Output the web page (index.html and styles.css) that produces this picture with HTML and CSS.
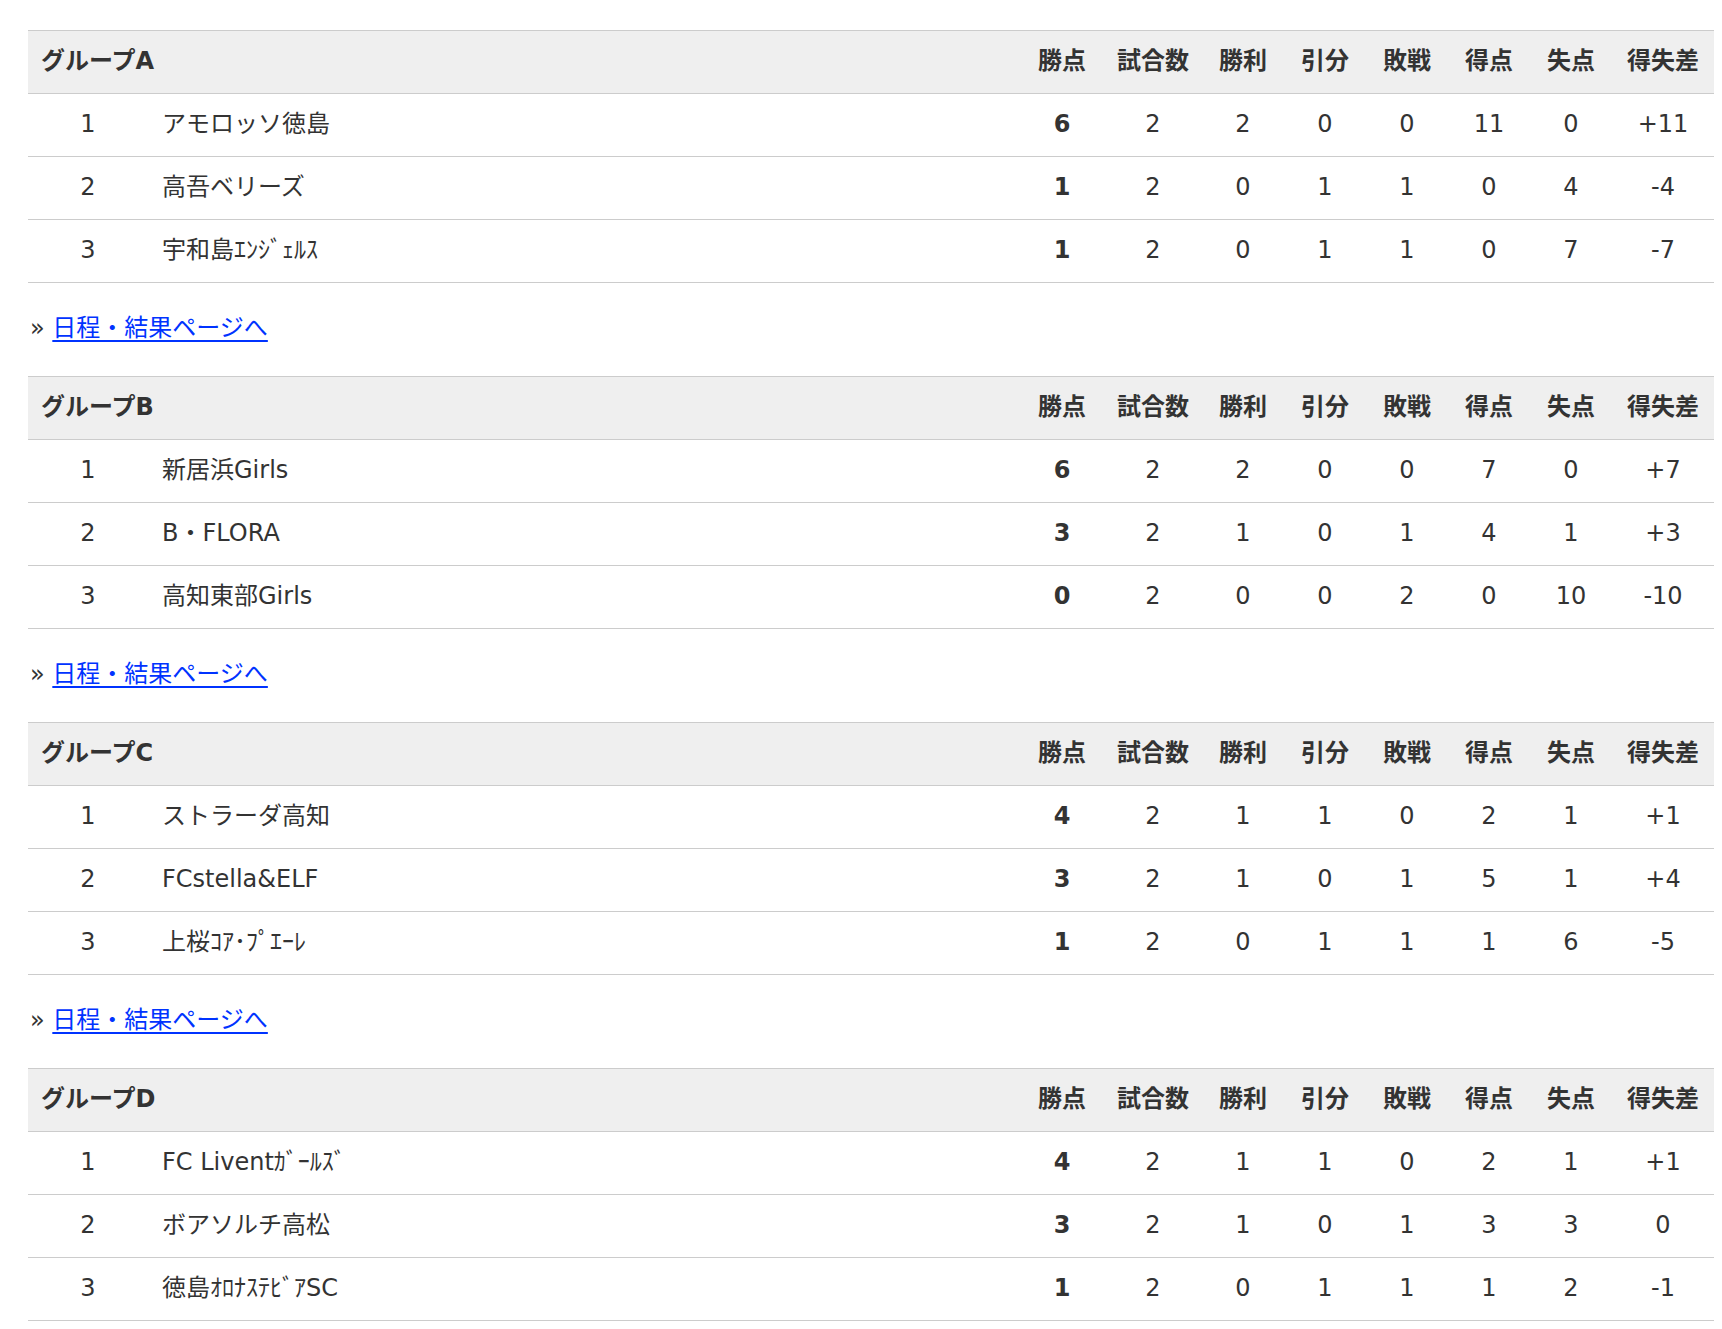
FILE: index.html
```html
<!DOCTYPE html>
<html lang="ja">
<head>
<meta charset="utf-8">
<title>グループ順位表</title>
<link rel="stylesheet" href="styles.css">
</head>
<body>
<div class="page">

<table class="standings">
<colgroup><col class="c-rank"><col class="c-team"><col class="c-pts"><col class="c-played"><col class="c-n"><col class="c-n"><col class="c-n"><col class="c-n"><col class="c-n"><col class="c-diff"></colgroup>
<thead><tr><th colspan="2" class="group">グループA</th><th>勝点</th><th>試合数</th><th>勝利</th><th>引分</th><th>敗戦</th><th>得点</th><th>失点</th><th>得失差</th></tr></thead>
<tbody>
<tr><td class="rank">1</td><td class="team">アモロッソ徳島</td><td class="pts">6</td><td>2</td><td>2</td><td>0</td><td>0</td><td>11</td><td>0</td><td>+11</td></tr>
<tr><td class="rank">2</td><td class="team">高吾ベリーズ</td><td class="pts">1</td><td>2</td><td>0</td><td>1</td><td>1</td><td>0</td><td>4</td><td>-4</td></tr>
<tr><td class="rank">3</td><td class="team">宇和島ｴﾝｼﾞｪﾙｽ</td><td class="pts">1</td><td>2</td><td>0</td><td>1</td><td>1</td><td>0</td><td>7</td><td>-7</td></tr>
</tbody>
</table>
<p class="more">» <a href="#">日程・結果ページへ</a></p>

<table class="standings">
<colgroup><col class="c-rank"><col class="c-team"><col class="c-pts"><col class="c-played"><col class="c-n"><col class="c-n"><col class="c-n"><col class="c-n"><col class="c-n"><col class="c-diff"></colgroup>
<thead><tr><th colspan="2" class="group">グループB</th><th>勝点</th><th>試合数</th><th>勝利</th><th>引分</th><th>敗戦</th><th>得点</th><th>失点</th><th>得失差</th></tr></thead>
<tbody>
<tr><td class="rank">1</td><td class="team">新居浜Girls</td><td class="pts">6</td><td>2</td><td>2</td><td>0</td><td>0</td><td>7</td><td>0</td><td>+7</td></tr>
<tr><td class="rank">2</td><td class="team">B・FLORA</td><td class="pts">3</td><td>2</td><td>1</td><td>0</td><td>1</td><td>4</td><td>1</td><td>+3</td></tr>
<tr><td class="rank">3</td><td class="team">高知東部Girls</td><td class="pts">0</td><td>2</td><td>0</td><td>0</td><td>2</td><td>0</td><td>10</td><td>-10</td></tr>
</tbody>
</table>
<p class="more">» <a href="#">日程・結果ページへ</a></p>

<table class="standings">
<colgroup><col class="c-rank"><col class="c-team"><col class="c-pts"><col class="c-played"><col class="c-n"><col class="c-n"><col class="c-n"><col class="c-n"><col class="c-n"><col class="c-diff"></colgroup>
<thead><tr><th colspan="2" class="group">グループC</th><th>勝点</th><th>試合数</th><th>勝利</th><th>引分</th><th>敗戦</th><th>得点</th><th>失点</th><th>得失差</th></tr></thead>
<tbody>
<tr><td class="rank">1</td><td class="team">ストラーダ高知</td><td class="pts">4</td><td>2</td><td>1</td><td>1</td><td>0</td><td>2</td><td>1</td><td>+1</td></tr>
<tr><td class="rank">2</td><td class="team">FCstella&amp;ELF</td><td class="pts">3</td><td>2</td><td>1</td><td>0</td><td>1</td><td>5</td><td>1</td><td>+4</td></tr>
<tr><td class="rank">3</td><td class="team">上桜ｺｱ･ﾌﾟｴｰﾚ</td><td class="pts">1</td><td>2</td><td>0</td><td>1</td><td>1</td><td>1</td><td>6</td><td>-5</td></tr>
</tbody>
</table>
<p class="more">» <a href="#">日程・結果ページへ</a></p>

<table class="standings">
<colgroup><col class="c-rank"><col class="c-team"><col class="c-pts"><col class="c-played"><col class="c-n"><col class="c-n"><col class="c-n"><col class="c-n"><col class="c-n"><col class="c-diff"></colgroup>
<thead><tr><th colspan="2" class="group">グループD</th><th>勝点</th><th>試合数</th><th>勝利</th><th>引分</th><th>敗戦</th><th>得点</th><th>失点</th><th>得失差</th></tr></thead>
<tbody>
<tr><td class="rank">1</td><td class="team">FC Liventｶﾞｰﾙｽﾞ</td><td class="pts">4</td><td>2</td><td>1</td><td>1</td><td>0</td><td>2</td><td>1</td><td>+1</td></tr>
<tr><td class="rank">2</td><td class="team">ボアソルチ高松</td><td class="pts">3</td><td>2</td><td>1</td><td>0</td><td>1</td><td>3</td><td>3</td><td>0</td></tr>
<tr><td class="rank">3</td><td class="team">徳島ｵﾛﾅｽﾃﾋﾞｱSC</td><td class="pts">1</td><td>2</td><td>0</td><td>1</td><td>1</td><td>1</td><td>2</td><td>-1</td></tr>
</tbody>
</table>

</div>
</body>
</html>
```
FILE: styles.css
```css
html, body {
  margin: 0;
  padding: 0;
  background: #ffffff;
}

.page {
  padding: 30px 8px 0 28px;
  font-family: "DejaVu Sans", "Noto Sans CJK JP", sans-serif;
  font-size: 24px;
  color: #333333;
}

.standings {
  width: 100%;
  border-collapse: collapse;
  table-layout: fixed;
}

.c-rank { width: 120px; }
.c-pts { width: 84px; }
.c-played { width: 98px; }
.c-n { width: 82px; }
.c-diff { width: 102px; }

.standings th,
.standings td {
  padding: 0 0 1px 0;
  line-height: 61px;
  text-align: center;
  white-space: nowrap;
  border-bottom: 1px solid #cccccc;
}

.standings th {
  padding-bottom: 2px;
  line-height: 60px;
  background: #efefef;
  border-top: 1px solid #cccccc;
  font-weight: bold;
}

.standings th.group {
  text-align: left;
  padding-left: 13px;
}

.standings td.team {
  text-align: left;
  padding-left: 14px;
}

.standings td.pts {
  font-weight: bold;
}

.more {
  margin: 27px 0 30px 0;
  line-height: 36px;
  height: 36px;
  padding-left: 2px;
}

.more a {
  color: #0033ff;
  text-decoration: underline;
  text-underline-offset: 4px;
}
```
